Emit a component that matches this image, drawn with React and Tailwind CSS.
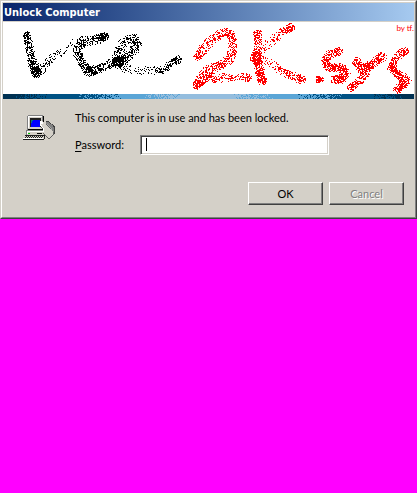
import React from "react";

const INK = [
  // x, y, spread, dots laid down per pixel of travel
  [[27, 35, 4, 8], [28, 43, 4, 5], [31, 56, 4, 8], [33, 64, 5, 10], [36, 72, 5, 14]],
  [[36, 72, 5, 6], [45, 65, 5, 3], [52, 57, 4, 2], [63, 50, 4, 1], [72, 45, 5, 1], [82, 41, 5, 3]],
  [[104, 36, 4, 14], [96, 39, 5, 7], [82, 41, 5, 5], [76, 50, 4, 6], [81, 62, 4, 7], [88, 72, 5, 12], [97, 69, 5, 8], [105, 65, 5, 4], [117, 61, 5, 10]],
  [[117, 62, 5, 12], [126, 56, 5, 6], [134, 49, 5, 6], [137, 42, 4, 8], [133, 37, 4, 5], [125, 41, 5, 5], [119, 48, 5, 5], [116, 56, 4, 5], [118, 62, 5, 8], [125, 68, 5, 2], [136, 70, 4, 1], [152, 70, 4, 2], [163, 70, 4, 5], [168, 64, 3, 3], [177, 59, 4, 9]],
];

const RED = [
  [[197, 56, 4, 8], [204, 47, 5, 4], [214, 37, 5, 5], [225, 31, 4, 6], [231, 35, 5, 9], [233, 46, 4, 4], [229, 59, 5, 7], [218, 65, 5, 6], [206, 72, 6, 7], [200, 80, 5, 12], [196, 85, 4, 14]],
  [[206, 76, 5, 3], [217, 78, 5, 5], [230, 77, 4, 3], [237, 77, 4, 2], [247, 77, 4, 6]],
  [[257, 33, 4, 8], [258, 44, 4, 3], [255, 57, 5, 14], [258, 66, 5, 9], [262, 81, 4, 12]],
  [[290, 27, 4, 9], [280, 33, 4, 3], [270, 42, 5, 2], [263, 48, 6, 2], [256, 57, 5, 5]],
  [[255, 58, 5, 5], [266, 61, 5, 2], [275, 66, 4, 2], [285, 73, 4, 7], [294, 76, 4, 3], [301, 79, 4, 9]],
  [[318, 79, 3, 9], [320, 79, 3, 6]],
  [[338, 51, 4, 8], [329, 54, 4, 5], [325, 60, 4, 7], [328, 67, 4, 12], [340, 67, 4, 12], [345, 72, 5, 14], [341, 79, 4, 11], [334, 79, 4, 8]],
  [[356, 61, 4, 7], [361, 69, 5, 11], [371, 64, 4, 8], [381, 57, 5, 10]],
  [[369, 66, 4, 4], [361, 79, 4, 6], [351, 87, 4, 9]],
  [[404, 51, 4, 9], [396, 56, 4, 5], [391, 68, 4, 12], [398, 74, 4, 9], [406, 80, 5, 12], [397, 89, 4, 9]],
];

function makeRandom(seed) {
  let a = seed;
  return () => {
    a = (a + 0x6d2b79f5) | 0;
    let t = Math.imul(a ^ (a >>> 15), 1 | a);
    t = (t + Math.imul(t ^ (t >>> 7), 61 | t)) ^ t;
    return ((t ^ (t >>> 14)) >>> 0) / 4294967296;
  };
}

function spray(strokes, seed) {
  const rand = makeRandom(seed);
  const dots = new Set();
  const puff = (x, y, r) => {
    const a = rand() * Math.PI * 2;
    const d = Math.sqrt(rand()) * (r + 0.3);
    dots.add(`M${Math.round(x + Math.cos(a) * d)} ${Math.round(y + Math.sin(a) * d)}h1v1h-1z`);
  };
  strokes.forEach((pts) => {
    for (let i = 0; i < pts.length - 1; i++) {
      const [x0, y0, r0, n0] = pts[i];
      const [x1, y1, r1, n1] = pts[i + 1];
      const steps = Math.max(1, Math.round(Math.hypot(x1 - x0, y1 - y0)));
      for (let k = 0; k < steps; k++) {
        const t = k / steps;
        const count = (n0 + (n1 - n0) * t) * 0.85;
        for (let j = 0; j < count; j++) puff(x0 + (x1 - x0) * t, y0 + (y1 - y0) * t, r0 + (r1 - r0) * t);
      }
    }
    [pts[0], pts[pts.length - 1]].forEach(([x, y, r, n]) => {
      for (let j = 0; j < n * 4; j++) puff(x, y, r);
    });
  });
  return [...dots].join("");
}

// start and end of each dithered change, and the colour it leads to
const BAND_START = "#003152";
const BAND = [
  [8, 46, "#005284"], [72, 118, "#5aa5d6"], [137, 180, "#94bdde"],
  [228, 272, "#5aa5d6"], [292, 340, "#005284"], [367, 402, "#003152"],
];

function ditheredBand() {
  const rand = makeRandom(77);
  const runs = {};
  for (let x = 0; x < 411; x++) {
    for (let y = 0; y < 5; y++) {
      let c = BAND_START;
      for (const [from, to, next] of BAND) {
        if (rand() < (x - from) / (to - from)) c = next;
      }
      runs[c] = (runs[c] || "") + `M${x} ${y}h1v1h-1z`;
    }
  }
  return Object.entries(runs);
}

const inkPath = spray(INK, 11);
const redPath = spray(RED, 23);
const bandPaths = ditheredBand();

function Banner() {
  return (
    <div className="relative bg-white">
      <svg viewBox="3 22 411 72" className="block w-full" shapeRendering="crispEdges" aria-hidden="true">
        <path d={inkPath} fill="#000" />
        <path d={redPath} fill="#f00" />
      </svg>
      <span className="absolute right-0 top-0 text-[8px] leading-3 text-[#ff0000]">by tf.</span>
      <svg viewBox="0 0 411 5" className="block w-full" shapeRendering="crispEdges" aria-hidden="true">
        {bandPaths.map(([c, d]) => <path key={c} d={d} fill={c} />)}
      </svg>
    </div>
  );
}

function ComputerIcon() {
  return (
    <svg width="32" height="26" viewBox="0 0 32 26" shapeRendering="crispEdges" aria-hidden="true">
      <path d="M5 0h15v1h1v13h-1v1H4V1h1z" fill="#808080" />
      <path d="M5 1h14v13H5z" fill="#d4d0c8" />
      <path d="M5 1h14v1H5zM5 2h1v11H5z" fill="#fff" />
      <path d="M20 1h1v13h-1zM5 14h15v1H5z" fill="#000" />
      <path d="M7 3h11v9H7z" fill="#202020" />
      <path d="M8 5h9v7H8z" fill="#0000ff" />
      <path d="M8 5h2v1H9v2H8z" fill="#008080" />
      <path d="M3 15h18v5H3z" fill="#808080" />
      <path d="M4 16h17v4H4z" fill="#d4d0c8" />
      <path d="M4 16h17v1H4zM4 16h1v3H4z" fill="#fff" />
      <path d="M5 18h2v1H5z" fill="#00c000" />
      <path d="M14 18h5v1h-5z" fill="#000" />
      <path d="M2 20h19v1h1v3h-1v1H0v-2h1v-2h1z" fill="#d4d0c8" />
      <path d="M2 20h19v1H2zM0 24h21v1H0zM21 20h1v4h-1z" fill="#202020" />
      <path d="M0 23h20v1H0z" fill="#fff" />
      <path d="M3 21h1v1H3zM5 21h1v1H5zM7 21h1v1H7zM9 21h1v1H9zM11 21h1v1h-1zM13 21h1v1h-1zM15 21h1v1h-1zM17 21h1v1h-1zM19 21h1v1h-1zM2 22h1v1H2zM4 22h1v1H4zM6 22h1v1H6zM8 22h1v1H8zM10 22h1v1h-1zM12 22h1v1h-1zM14 22h1v1h-1zM16 22h1v1h-1zM18 22h1v1h-1z" fill="#202020" />
      <path d="M23 6h3l2 3h2l2 3v6l-5 6-5-12z" fill="#404040" />
      <path d="M23 7h3l1 2h2l2 4v5l-3 2-6-9z" fill="#808080" />
      <path d="M24 8l5 6v3l-6-7z" fill="#a8a8a8" />
      <path d="M18 6h2l2 3 3 1 6 8v1l-4 5h-1l-6-5v-4l-3-5z" fill="#606060" />
      <path d="M17 6h3l1 2 3 2 6 7v2l-4 4-6-5v-4l-3-4z" fill="#d4d0c8" />
      <path d="M17 6h2l1 2v1h-2l3 5v3h-1v-3l-3-4z" fill="#fff" />
    </svg>
  );
}

const raised =
  "h-[23px] w-[75px] border border-t-white border-l-white border-r-[#404040] border-b-[#404040] bg-[#d4d0c8] text-center leading-5 shadow-[inset_-1px_-1px_0_#808080]";

export default function App() {
  return (
    <main className="min-h-screen bg-[#ff00ff] font-['Lato','DejaVu_Sans_Condensed',sans-serif] text-[11px] text-black">
      <section
        aria-labelledby="dialog-title"
        className="border border-t-[#d4d0c8] border-l-[#d4d0c8] border-r-[#404040] border-b-[#404040] bg-[#d4d0c8]"
      >
        <div className="border border-t-white border-l-white border-r-[#808080] border-b-[#808080] p-px">
          <h1
            id="dialog-title"
            className="mb-px h-[18px] bg-linear-to-r from-[#0a246a] to-[#a6caf0] px-px font-['DejaVu_Sans_Condensed','DejaVu_Sans',sans-serif] font-bold leading-5 text-white"
          >
            Unlock Computer
          </h1>
          <Banner />
          <form className="px-2.5 pb-[11px] pt-3" onSubmit={(e) => e.preventDefault()}>
            <div className="flex">
              <div className="w-[62px] shrink-0 pl-2.5 pt-1">
                <ComputerIcon />
              </div>
              <div className="min-w-0 flex-1">
                <p className="whitespace-nowrap leading-[14px]">This computer is in use and has been locked.</p>
                <div className="mt-[10px] flex items-center">
                  <label htmlFor="password" className="w-[65px] shrink-0">
                    <span className="underline underline-offset-2">P</span>assword:
                  </label>
                  <div className="relative w-[189px]">
                    <input
                      id="password"
                      type="password"
                      className="block h-5 w-full border border-t-[#808080] border-l-[#808080] border-r-white border-b-white bg-white px-1 shadow-[inset_1px_1px_0_#404040,inset_-1px_-1px_0_#d4d0c8] outline-none"
                    />
                    <span className="absolute left-1.5 top-[3px] h-[13px] w-px bg-black" />
                  </div>
                </div>
              </div>
            </div>
            <div className="mt-[27px] flex justify-end gap-1.5">
              <button type="submit" className={raised}>OK</button>
              <button type="button" disabled className={raised + " text-[#808080] [text-shadow:1px_1px_0_#fff]"}>
                Cancel
              </button>
            </div>
          </form>
        </div>
      </section>
    </main>
  );
}
